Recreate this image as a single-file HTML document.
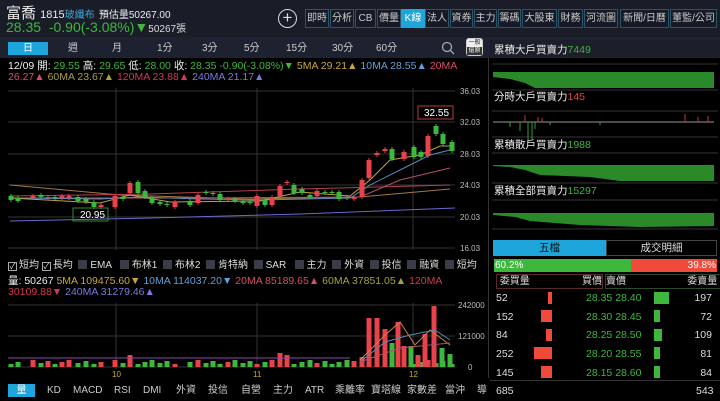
<!DOCTYPE html>
<html><head><meta charset="utf-8"><style>
*{margin:0;padding:0;box-sizing:border-box}
body{width:720px;height:401px;background:#000;overflow:hidden;position:relative;font-family:"Liberation Sans","Noto Sans CJK TC",sans-serif;color:#ddd}
.a{position:absolute;white-space:nowrap}
.btn{position:absolute;top:9px;height:19px;border:1px solid #2e5566;background:#151a26;color:#ccc;font-size:10px;line-height:17px;text-align:center}
.g{color:#3db83d}.r{color:#e8424a}.y{color:#c9a73a}.b{color:#5fa0d8}.p{color:#d64d6a}.v{color:#7a7ae0}
.t{position:absolute;top:42px;font-size:10px;color:#ccc;line-height:13px;height:13px}
.cb{display:inline-block;width:9px;height:9px;background:#3a3d48;margin-right:3px;vertical-align:-1px}
.ck{display:inline-block;width:9px;height:9px;border:1px solid #aaa;margin-right:2px;vertical-align:-1px;font-size:8px;line-height:7px;text-align:center}
.bt{position:absolute;top:384px;font-size:10px;color:#ccc;line-height:13px;height:13px}
.row{position:absolute;left:496px;width:220px;height:14px;font-size:10.5px;line-height:14px}
</style></head><body>
<div class="a" style="left:0;top:0;width:720px;height:37px;background:#1a1c27"></div>
<div class="a" style="left:6px;top:2px;font-size:15px;color:#eee">富喬 <span style="font-size:11px">1815</span><span style="font-size:10px;color:#3aa6d8">玻纖布</span> <span style="font-size:10px">預估量50267.00</span></div>
<div class="a g" style="left:6px;top:19px;font-size:14px">28.35 &nbsp;-0.90(-3.08%)▼<span style="color:#ddd;font-size:10px">50267張</span></div>
<div class="a" style="left:278px;top:9px;width:19px;height:19px;border:1.5px solid #ddd;border-radius:50%;color:#ddd;font-size:17px;line-height:15px;text-align:center">+</div>
<div class="btn" style="left:305px;width:24px">即時</div>
<div class="btn" style="left:330px;width:24px">分析</div>
<div class="btn" style="left:355px;width:21px">CB</div>
<div class="btn" style="left:377px;width:24px">價量</div>
<div class="btn" style="left:401px;width:24px;background:#1ea6dc;color:#fff;border-color:#1ea6dc">K線</div>
<div class="btn" style="left:425px;width:24px">法人</div>
<div class="btn" style="left:450px;width:23px">資券</div>
<div class="btn" style="left:474px;width:23px">主力</div>
<div class="btn" style="left:498px;width:23px">籌碼</div>
<div class="btn" style="left:522px;width:35px">大股東</div>
<div class="btn" style="left:558px;width:25px">財務</div>
<div class="btn" style="left:584px;width:34px">河流圖</div>
<div class="btn" style="left:620px;width:49px">新聞/日曆</div>
<div class="btn" style="left:670px;width:47px">董監/公司</div>
<div class="a" style="left:0;top:37px;width:720px;height:21px;background:#1e2230"></div>
<div class="a" style="left:8px;top:42px;width:40px;height:13px;background:#1ea6dc;color:#fff;font-size:10px;text-align:center;line-height:13px">日</div>
<div class="t" style="left:68px">週</div><div class="t" style="left:112px">月</div><div class="t" style="left:157px">1分</div><div class="t" style="left:202px">3分</div><div class="t" style="left:244px">5分</div><div class="t" style="left:286px">15分</div><div class="t" style="left:332px">30分</div><div class="t" style="left:376px">60分</div>
<svg class="a" style="left:441px;top:41px" width="14" height="14"><circle cx="6" cy="6" r="4.5" fill="none" stroke="#aaa" stroke-width="1.3"/><line x1="9.3" y1="9.3" x2="13" y2="13" stroke="#aaa" stroke-width="1.3"/></svg>
<div class="a" style="left:466px;top:38px;width:17px;height:18px;border:1px solid #ccc;border-radius:3px;background:#eee;color:#222;font-size:6px;text-align:center;line-height:8px">一般<br><span style="background:#333;color:#fff;display:block">還原</span></div>
<div class="a" style="left:488px;top:58px;width:1px;height:320px;background:#333"></div>
<div class="a" style="left:8px;top:58px;font-size:10.5px;color:#eee">12/09 開: <span class="g">29.55</span> 高: <span class="g">29.65</span> 低: <span class="g">28.00</span> 收: <span class="g">28.35 -0.90(-3.08%)▼</span> <span class="y">5MA 29.21▲</span> <span class="b">10MA 28.55▲</span> <span class="p">20MA</span></div>
<div class="a" style="left:8px;top:71px;font-size:10.5px"><span class="p">26.27▲</span> <span class="y" style="color:#a8a040">60MA 23.67▲</span> <span class="p" style="color:#d03a50">120MA 23.88▲</span> <span class="v">240MA 21.17▲</span></div>
<svg class="a" style="left:0;top:85px" width="488" height="168" viewBox="0 85 488 168">
<g stroke="#333" stroke-width="1">
<line x1="8" y1="91" x2="455" y2="91"/><line x1="8" y1="122" x2="455" y2="122"/><line x1="8" y1="154" x2="455" y2="154"/><line x1="8" y1="185" x2="455" y2="185"/><line x1="8" y1="217" x2="455" y2="217"/><line x1="8" y1="248" x2="455" y2="248"/>
<line x1="116" y1="88" x2="116" y2="250"/><line x1="257" y1="88" x2="257" y2="250"/><line x1="413" y1="88" x2="413" y2="250"/>
</g>
<g font-size="8" fill="#bbb" font-family="Liberation Sans"><text x="460" y="94">36.03</text><text x="460" y="125">32.03</text><text x="460" y="157">28.03</text><text x="460" y="188">24.03</text><text x="460" y="220">20.03</text><text x="460" y="251">16.03</text></g>
<polyline fill="none" stroke="#6a6ad0" stroke-width="1" points="10,221 150,218 300,214 455,208"/>
<polyline fill="none" stroke="#a07a40" stroke-width="1" points="10,185 120,195 250,199 360,197 450,189"/>
<polyline fill="none" stroke="#b84050" stroke-width="1" points="10,196 150,194 300,189 450,185"/>
<polyline fill="none" stroke="#b05070" stroke-width="1" points="10,198 200,198 360,197 400,180 450,168"/>
<polyline fill="none" stroke="#5a8ab8" stroke-width="1" points="10,198 100,199 140,197 200,199 260,200 350,198 370,185 400,170 430,155 450,150"/>
<polyline fill="none" stroke="#c0a040" stroke-width="1" points="10,198 100,203 130,195 170,202 260,201 300,192 350,196 370,180 390,160 420,155 440,146 452,146"/>
<g id="c"></g>
<rect x="73" y="208" width="35" height="13" fill="none" stroke="#2f8a3a"/><text x="80" y="218" font-size="10" fill="#fff" font-family="Liberation Sans">20.95</text>
<rect x="418" y="106" width="35" height="13" fill="none" stroke="#b83a3a"/><text x="424" y="116" font-size="10" fill="#fff" font-family="Liberation Sans">32.55</text>
</svg>
<div class="a" style="left:8px;top:256px;font-size:10px;color:#ddd"><span class="ck">✓</span>短均 <span class="ck">✓</span>長均 &nbsp;<span class="cb"></span>EMA &nbsp;&nbsp;<span class="cb"></span>布林1 &nbsp;<span class="cb"></span>布林2 &nbsp;<span class="cb"></span>肯特納 &nbsp;<span class="cb"></span>SAR &nbsp;&nbsp;<span class="cb"></span>主力 &nbsp;<span class="cb"></span>外資 &nbsp;<span class="cb"></span>投信 &nbsp;<span class="cb"></span>融資 &nbsp;<span class="cb"></span>短均</div>
<div class="a" style="left:8px;top:273px;font-size:10.5px;color:#eee">量: 50267 <span class="y">5MA 109475.60▼</span> <span class="b">10MA 114037.20▼</span> <span class="p">20MA 85189.65▲</span> <span style="color:#a8a040">60MA 37851.05▲</span> <span style="color:#d03a50">120MA</span></div>
<div class="a" style="left:8px;top:286px;font-size:10.5px"><span style="color:#d03a50">30109.88▼</span> <span class="v">240MA 31279.46▲</span></div>
<svg class="a" style="left:0;top:300px" width="488" height="82" viewBox="0 300 488 82">
<g stroke="#333"><line x1="8" y1="305" x2="455" y2="305"/><line x1="8" y1="336" x2="455" y2="336"/><line x1="8" y1="367" x2="455" y2="367"/><line x1="116" y1="303" x2="116" y2="369"/><line x1="257" y1="303" x2="257" y2="369"/><line x1="413" y1="303" x2="413" y2="369"/></g>
<g font-size="8" fill="#bbb" font-family="Liberation Sans"><text x="458" y="308">242000</text><text x="458" y="339">121000</text><text x="468" y="370">0</text></g>
<g id="vb"></g>
<polyline fill="none" stroke="#d08040" points="360,360 375,345 385,335 400,322 415,345 430,330 450,345"/>
<polyline fill="none" stroke="#5a8ab8" points="360,362 385,342 410,335 435,330 450,340"/>
<polyline fill="none" stroke="#b05070" points="360,362 400,348 450,343"/>
<line x1="8" y1="358" x2="350" y2="358" stroke="#8a4ab0"/>
<g font-size="8" fill="#c9b030" font-family="Liberation Sans"><text x="112" y="377">10</text><text x="253" y="377">11</text><text x="409" y="377">12</text></g>
</svg>
<div class="a" style="left:8px;top:384px;width:27px;height:13px;background:#1ea6dc;color:#fff;font-size:10px;text-align:center;line-height:13px">量</div>
<div class="bt" style="left:47px">KD</div><div class="bt" style="left:73px">MACD</div><div class="bt" style="left:114px">RSI</div><div class="bt" style="left:143px">DMI</div><div class="bt" style="left:176px">外資</div><div class="bt" style="left:208px">投信</div><div class="bt" style="left:241px">自營</div><div class="bt" style="left:273px">主力</div><div class="bt" style="left:305px">ATR</div><div class="bt" style="left:335px">乘離率</div><div class="bt" style="left:371px">寶塔線</div><div class="bt" style="left:407px">家數差</div><div class="bt" style="left:445px">當沖</div><div class="bt" style="left:477px">導</div>
<div class="a" style="left:490px;top:40px;width:230px;height:17px;background:#1c1f2a"></div>
<div class="a" style="left:494px;top:42px;font-size:10.5px;color:#eee">累積大戶買賣力<span class="g">7449</span></div>
<svg class="a" style="left:490px;top:57px" width="230" height="180">
<g stroke="#333"><line x1="2" y1="7" x2="228" y2="7"/><line x1="2" y1="33" x2="228" y2="33"/><line x1="2" y1="54" x2="228" y2="54"/><line x1="2" y1="80" x2="228" y2="80"/><line x1="2" y1="96" x2="228" y2="96"/><line x1="2" y1="126" x2="228" y2="126"/><line x1="2" y1="143" x2="228" y2="143"/><line x1="2" y1="172" x2="228" y2="172"/></g>
<polygon fill="#2a8a2a" points="3,15 224,15 224,31 45,31 35,26 20,22 3,20"/>
<line x1="3" y1="65" x2="224" y2="65" stroke="#999"/>
<g stroke="#3a9a3a"><line x1="20" y1="65" x2="20" y2="70"/><line x1="30" y1="65" x2="30" y2="74"/><line x1="38" y1="65" x2="38" y2="85"/><line x1="42" y1="65" x2="42" y2="82"/><line x1="45" y1="65" x2="45" y2="72"/><line x1="60" y1="65" x2="60" y2="68"/><line x1="110" y1="65" x2="110" y2="68"/></g>
<g stroke="#c33"><line x1="35" y1="65" x2="35" y2="58"/><line x1="48" y1="65" x2="48" y2="60"/><line x1="52" y1="65" x2="52" y2="61"/><line x1="195" y1="65" x2="195" y2="57"/><line x1="208" y1="65" x2="208" y2="60"/><line x1="218" y1="65" x2="218" y2="59"/></g>
<polygon fill="#2a8a2a" points="3,108 224,108 224,124 130,124 100,120 50,118 35,113 20,110 3,109"/>
<polygon fill="#2a8a2a" points="3,156 224,156 224,169 150,170 90,168 40,164 25,160 3,158"/>
</svg>
<div class="a" style="left:494px;top:89px;font-size:10.5px;color:#eee">分時大戶買賣力<span class="r">145</span></div>
<div class="a" style="left:494px;top:137px;font-size:10.5px;color:#eee">累積散戶買賣力<span class="g">1988</span></div>
<div class="a" style="left:494px;top:183px;font-size:10.5px;color:#eee">累積全部買賣力<span class="g">15297</span></div>
<div class="a" style="left:493px;top:240px;width:113px;height:16px;background:#1ea6dc;color:#111;font-size:10.5px;text-align:center;line-height:16px">五檔</div>
<div class="a" style="left:606px;top:240px;width:111px;height:16px;border:1px solid #444;color:#ddd;font-size:10.5px;text-align:center;line-height:14px">成交明細</div>
<div class="a" style="left:494px;top:259px;width:137px;height:13px;background:#3db83d;color:#fff;font-size:10px;line-height:13px;padding-left:1px">60.2%</div>
<div class="a" style="left:631px;top:259px;width:86px;height:13px;background:#f04a3a;color:#fff;font-size:10px;line-height:13px;text-align:right;padding-right:1px">39.8%</div>
<div class="a" style="left:496px;top:274px;width:107px;height:15px;border:1px solid #5a2a2a;font-size:10px;color:#ddd;line-height:13px">&nbsp;委買量<span style="float:right">買價</span></div>
<div class="a" style="left:605px;top:274px;width:116px;height:15px;border:1px solid #2a4a2a;font-size:10px;color:#ddd;line-height:13px">賣價<span style="float:right">委賣量&nbsp;</span></div>
<div class="row" style="top:291px">52<span class="g" style="position:absolute;left:90px">28.35 28.40</span><span style="position:absolute;right:4px">197</span></div>
<div class="row" style="top:310px">152<span class="g" style="position:absolute;left:90px">28.30 28.45</span><span style="position:absolute;right:4px">72</span></div>
<div class="row" style="top:328px">84<span class="g" style="position:absolute;left:90px">28.25 28.50</span><span style="position:absolute;right:4px">109</span></div>
<div class="row" style="top:347px">252<span class="g" style="position:absolute;left:90px">28.20 28.55</span><span style="position:absolute;right:4px">81</span></div>
<div class="row" style="top:366px">145<span class="g" style="position:absolute;left:90px">28.15 28.60</span><span style="position:absolute;right:4px">84</span></div>
<div class="a" style="left:548px;top:292px;width:4px;height:12px;background:#f04a3a"></div>
<div class="a" style="left:541px;top:310px;width:11px;height:12px;background:#f04a3a"></div>
<div class="a" style="left:546px;top:329px;width:6px;height:12px;background:#f04a3a"></div>
<div class="a" style="left:534px;top:347px;width:18px;height:12px;background:#f04a3a"></div>
<div class="a" style="left:541px;top:366px;width:11px;height:12px;background:#f04a3a"></div>
<div class="a" style="left:654px;top:292px;width:15px;height:12px;background:#3db83d"></div>
<div class="a" style="left:654px;top:310px;width:6px;height:12px;background:#3db83d"></div>
<div class="a" style="left:654px;top:329px;width:8px;height:12px;background:#3db83d"></div>
<div class="a" style="left:654px;top:347px;width:6px;height:12px;background:#3db83d"></div>
<div class="a" style="left:654px;top:366px;width:6px;height:12px;background:#3db83d"></div>
<div class="a" style="left:490px;top:380px;width:230px;height:1px;background:#333"></div>
<div class="a" style="left:496px;top:385px;font-size:10.5px">685</div>
<div class="a" style="left:696px;top:385px;font-size:10.5px">543</div>
<script>
var C=[[11,196,200,'g'],[18,198,201,'g'],[33,196,198,'r'],[41,195,197,'g'],[48,197,198,'r'],[55,197,198,'g'],[62,196,198,'r'],[69,196,198,'r'],[78,197,201,'g'],[86,199,202,'g'],[94,202,207,'g'],[101,205,207,'r'],[115,196,207,'r'],[123,197,199,'g'],[130,183,193,'r'],[138,182,193,'g'],[145,191,197,'g'],[152,198,203,'g'],[160,202,204,'g'],[167,204,205,'g'],[175,202,207,'r'],[190,201,205,'g'],[198,195,203,'r'],[206,192,193,'g'],[213,193,194,'g'],[220,194,200,'g'],[228,199,200,'r'],[235,199,201,'g'],[243,201,203,'g'],[250,202,203,'g'],[257,196,206,'r'],[265,200,205,'g'],[272,197,205,'r'],[280,186,196,'r'],[287,182,183,'r'],[294,185,193,'g'],[302,189,193,'g'],[310,195,197,'g'],[317,191,196,'r'],[325,192,193,'g'],[332,192,193,'g'],[339,192,199,'g'],[347,197,198,'g'],[354,197,199,'r'],[362,180,197,'r'],[369,160,178,'r'],[377,153,155,'r'],[385,149,151,'r'],[392,149,159,'g'],[404,152,159,'r'],[414,147,157,'g'],[421,152,157,'g'],[428,136,156,'r'],[436,126,134,'g'],[443,134,144,'g'],[452,142,151,'g']];
var s='';C.forEach(function(c){var col=c[3]=='g'?'#3db83d':'#e8424a';s+='<line x1="'+c[0]+'" x2="'+c[0]+'" y1="'+(c[1]-2)+'" y2="'+(c[2]+2)+'" stroke="'+col+'"/><rect x="'+(c[0]-2.5)+'" y="'+c[1]+'" width="5" height="'+Math.max(1,c[2]-c[1])+'" fill="'+col+'"/>';});
document.getElementById('c').innerHTML=s;
var v='';C.forEach(function(c,i){var h=3+((i*7)%5);var col=c[3]=='g'?'#3db83d':'#e8424a';v+='<rect x="'+(c[0]-2.5)+'" y="'+(367-h)+'" width="5" height="'+h+'" fill="'+col+'"/>';});
[[115,360,'r'],[130,355,'r'],[280,353,'r'],[287,355,'r'],[354,361,'r'],[362,357,'r'],[369,318,'r'],[377,318,'r'],[385,329,'r'],[392,343,'g'],[398,322,'r'],[404,346,'r'],[411,346,'g'],[418,355,'r'],[425,334,'r'],[434,306,'r'],[442,348,'g'],[450,354,'g']].forEach(function(b){v+='<rect x="'+(b[0]-2.5)+'" y="'+b[1]+'" width="5" height="'+(367-b[1])+'" fill="'+(b[2]=='g'?'#3db83d':'#e8424a')+'"/>';});
document.getElementById('vb').innerHTML=v;
</script>
</body></html>
